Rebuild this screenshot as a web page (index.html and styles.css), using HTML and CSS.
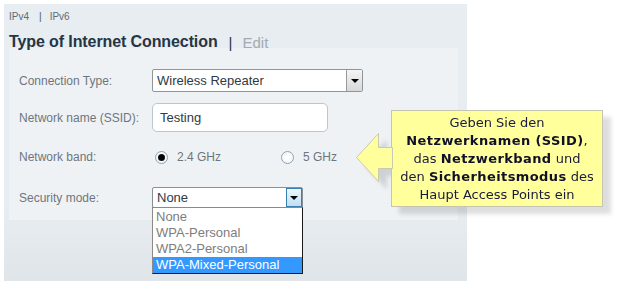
FILE: index.html
```html
<!DOCTYPE html>
<html>
<head>
<meta charset="utf-8">
<link rel="stylesheet" href="styles.css">
</head>
<body>
<div class="panel">
  <div class="tabs"><span class="tab">IPv4</span><span class="tabsep">|</span><span class="tab">IPv6</span></div>
  <div class="title"><span class="title-main">Type of Internet Connection</span><span class="title-sep">|</span><span class="title-edit">Edit</span></div>
  <div class="inner">
    <div class="row row1">
      <div class="label">Connection Type:</div>
      <div class="select select-wide">
        <span class="select-text">Wireless Repeater</span>
        <span class="select-btn"><span class="tri"></span></span>
      </div>
    </div>
    <div class="row row2">
      <div class="label">Network name (SSID):</div>
      <div class="input">Testing</div>
    </div>
    <div class="row row3">
      <div class="label">Network band:</div>
      <div class="radios">
        <div class="opt opt1"><span class="radio checked"></span><span class="opt-text">2.4 GHz</span></div>
        <div class="opt"><span class="radio"></span><span class="opt-text">5 GHz</span></div>
      </div>
    </div>
    <div class="row row4">
      <div class="label">Security mode:</div>
      <div class="select select-narrow">
        <span class="select-text">None</span>
        <span class="select-btn active"><span class="tri"></span></span>
        <div class="list">
          <div class="item">None</div>
          <div class="item">WPA-Personal</div>
          <div class="item">WPA2-Personal</div>
          <div class="item selected">WPA-Mixed-Personal</div>
        </div>
      </div>
    </div>
  </div>
</div>
<div class="callout">
  <svg class="arrow" width="38" height="52" viewBox="0 0 38 52">
    <polygon points="36.5,14.5 22.5,14.5 22.5,0.5 0.5,24.5 22.5,48.5 22.5,35.5 36.5,35.5" fill="#ffff9c" stroke="#c9c9b0" stroke-width="1"/>
  </svg>
  <div class="bubble">
    Geben Sie den<br>
    <b>Netzwerknamen (SSID)</b>,<br>
    das <b>Netzwerkband</b> und<br>
    den <b>Sicherheitsmodus</b> des<br>
    Haupt Access Points ein
  </div>
</div>
</body>
</html>
```

FILE: styles.css
```css
html, body {
  margin: 0;
  padding: 0;
  background: #ffffff;
}
body {
  width: 619px;
  height: 290px;
  position: relative;
  font-family: "Liberation Sans", Arial, sans-serif;
}
.panel {
  margin: 4px 0 0 4px;
  width: 463px;
  height: 277px;
  box-sizing: border-box;
  padding-left: 5px;
  background: linear-gradient(to bottom, #e7edf0 0px, #e8edf1 200px, #dfe5e9 277px);
}
.tabs {
  height: 26px;
  display: flex;
  align-items: flex-start;
  padding-top: 7px;
  box-sizing: border-box;
  font-size: 10px;
  color: #5f6b75;
}
.tabsep {
  margin: 0 8px 0 10px;
  color: #4a5560;
}
.title {
  height: 18px;
  display: flex;
  align-items: center;
  white-space: nowrap;
  padding-top: 3px;
  margin-bottom: -3px;
}
.title-main {
  font-size: 16px;
  font-weight: bold;
  color: #253545;
  letter-spacing: -0.1px;
}
.title-sep {
  font-size: 15px;
  color: #253545;
  margin: 0 10px 0 11px;
}
.title-edit {
  font-size: 15px;
  color: #a2aab0;
}
.inner {
  width: 449px;
  height: 172px;
  box-sizing: border-box;
  background: #eef2f5;
  padding: 21px 0 0 10px;
}
.row {
  display: flex;
  align-items: center;
}
.label {
  width: 133px;
  font-size: 12px;
  color: #6e767d;
  white-space: nowrap;
}
.row1 { height: 23px; }
.row2 { height: 29px; margin-top: 11px; }
.row3 { height: 16px; margin-top: 17px; }
.row4 { height: 21px; margin-top: 22px; }
.select {
  position: relative;
  height: 100%;
  box-sizing: border-box;
  border: 1px solid #8f969b;
  border-radius: 2px;
  background: #ffffff;
  display: flex;
  align-items: center;
}
.select-wide { width: 211px; }
.select-narrow { width: 151px; border-color: #8a9096; }
.select-text {
  flex: 1;
  padding-left: 4px;
  font-size: 13px;
  color: #2f3a44;
}
.select-btn {
  width: 16px;
  height: 100%;
  box-sizing: border-box;
  border-left: 1px solid #9a9a9a;
  background: linear-gradient(to bottom, #f4f4f4, #d8d8d8);
  display: flex;
  align-items: center;
  justify-content: center;
}
.select-btn.active {
  border: 1px solid #3c7fb1;
  background: linear-gradient(to bottom, #eaf6fd, #bfe0f6);
}
.tri {
  width: 0;
  height: 0;
  border-left: 4px solid transparent;
  border-right: 4px solid transparent;
  border-top: 4px solid #000000;
}
.input {
  width: 176px;
  height: 100%;
  box-sizing: border-box;
  border: 1px solid #bcc6cd;
  border-radius: 5px;
  background: #ffffff;
  font-size: 13px;
  color: #2f3a44;
  padding-left: 7px;
  display: flex;
  align-items: center;
}
.radios {
  display: flex;
  align-items: center;
}
.opt {
  display: flex;
  align-items: center;
}
.opt1 { width: 126px; }
.radio {
  width: 13px;
  height: 13px;
  box-sizing: border-box;
  border-radius: 50%;
  border: 1px solid #8fa3b3;
  background: radial-gradient(circle, #ffffff 0, #eef3f6 100%);
  margin-left: 3px;
  display: flex;
  align-items: center;
  justify-content: center;
}
.radio.checked::after {
  content: "";
  width: 7px;
  height: 7px;
  border-radius: 50%;
  background: radial-gradient(circle, #000000 40%, #23313c 100%);
}
.opt-text {
  margin-left: 9px;
  font-size: 12px;
  color: #6e767d;
}
.list {
  position: absolute;
  top: 100%;
  left: 0;
  width: 151px;
  height: 67px;
  box-sizing: border-box;
  border: 1px solid #1a1a1a;
  border-left-color: #8a8a8a;
  border-top-color: #8a8a8a;
  background: #ffffff;
  padding-top: 1px;
  margin-left: -1px;
}
.item {
  height: 16px;
  line-height: 16px;
  font-size: 13px;
  color: #7d7d7d;
  padding-left: 3px;
}
.item.selected {
  background: #3399ff;
  color: #ffffff;
}
.callout {
  position: absolute;
  left: 356px;
  top: 110px;
  display: flex;
  align-items: flex-start;
  filter: drop-shadow(8px 7px 2px rgba(0, 0, 0, 0.13));
}
.arrow {
  margin-top: 23px;
  margin-right: -2px;
  position: relative;
  z-index: 1;
}
.bubble {
  width: 212px;
  height: 97px;
  box-sizing: border-box;
  background: #ffff9c;
  border: 1px solid #c4c4b0;
  font-family: "DejaVu Sans", Verdana, sans-serif;
  font-size: 13px;
  line-height: 18px;
  color: #1a1a3c;
  text-align: center;
  padding-top: 3px;
  margin-left: -1px;
  white-space: nowrap;
}
.bubble b {
  color: #10102a;
  letter-spacing: 0.4px;
}
```
